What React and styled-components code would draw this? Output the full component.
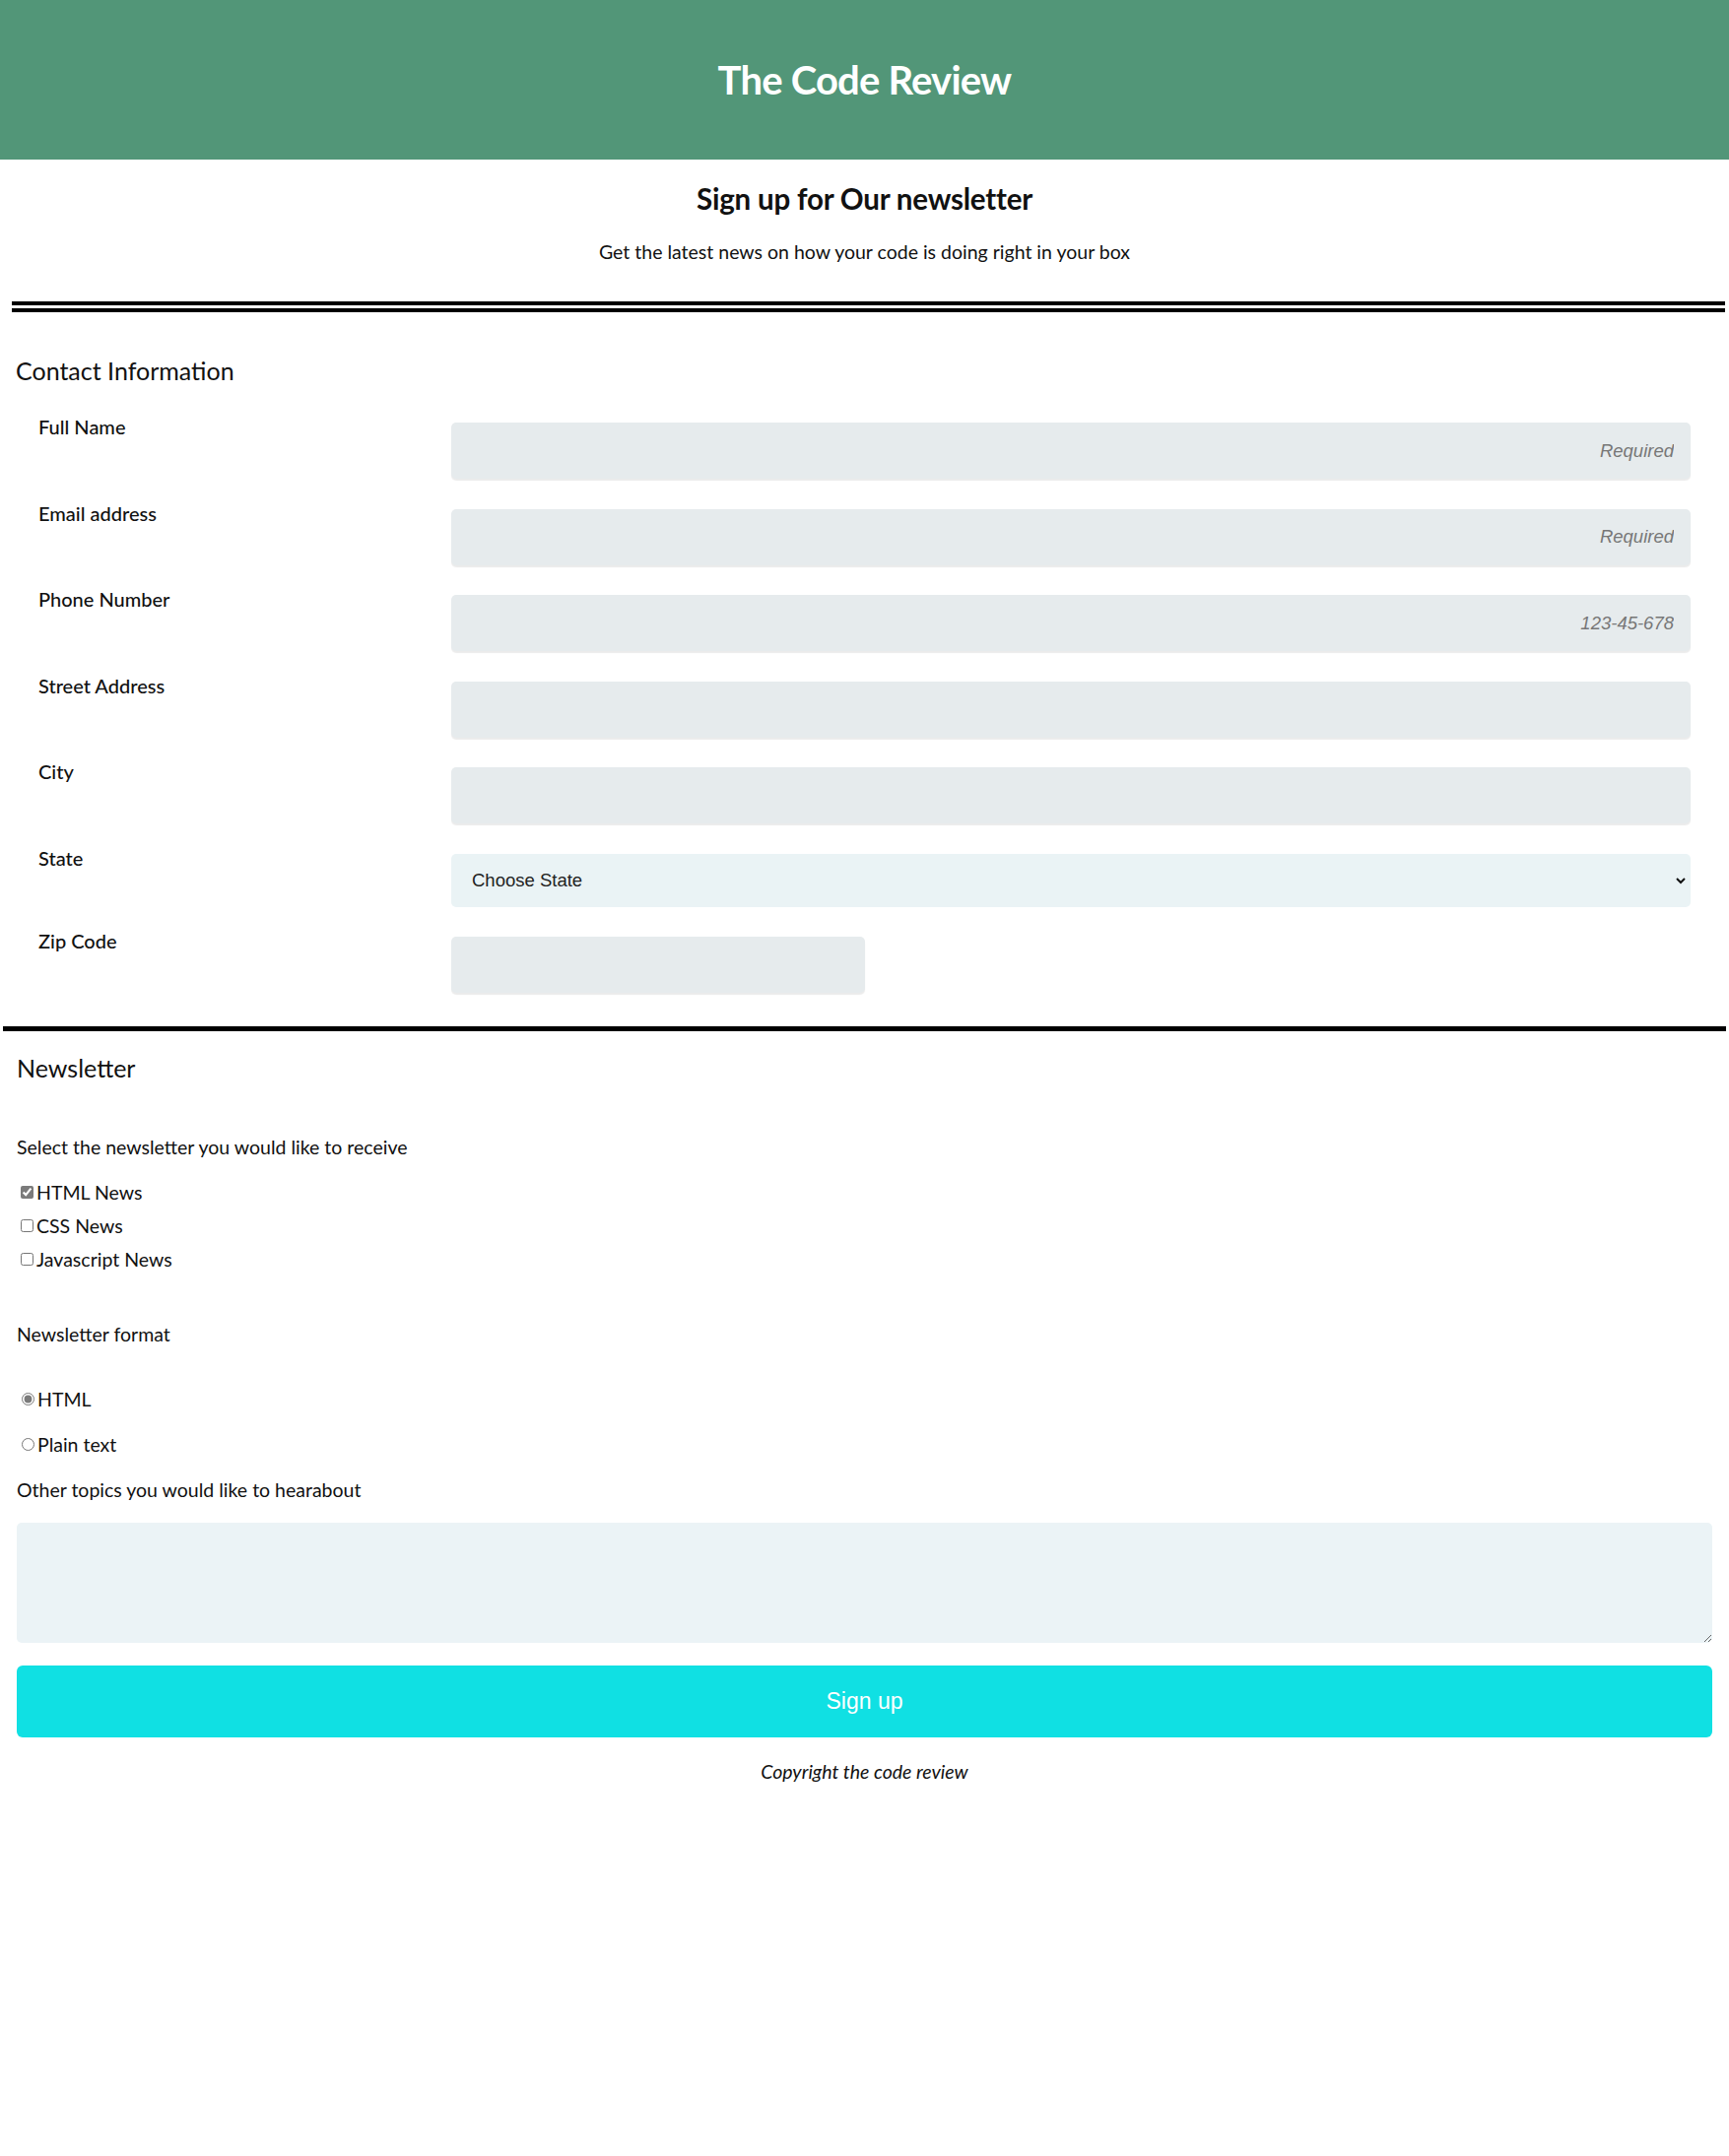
import React from 'react';
import styled, { createGlobalStyle } from 'styled-components';

const GlobalStyle = createGlobalStyle`
  html, body {
    margin: 0;
    padding: 0;
    background: #ffffff;
  }
  body {
    font-family: Lato, "Noto Sans", sans-serif;
    color: #111;
  }
  * {
    box-sizing: border-box;
  }
`;

const Page = styled.div`
  min-height: 2189px;
  padding-bottom: 40px;
`;

const Header = styled.header`
  height: 162px;
  background: #529678;
  display: flex;
  align-items: center;
  justify-content: center;
`;

const Title = styled.h1`
  margin: 0;
  color: #fff;
  font-size: 40px;
  font-weight: 700;
  letter-spacing: -0.8px;
`;

const Intro = styled.section`
  text-align: center;
  padding-top: 22px;
`;

const Heading2 = styled.h2`
  margin: 0;
  font-size: 29.5px;
  font-weight: 700;
  letter-spacing: -0.2px;
`;

const Lead = styled.p`
  margin: 25px 0 0;
  font-size: 19.5px;
`;

const DoubleRule = styled.hr`
  margin: 39px 4px 0 12px;
  border: none;
  border-top: 11px double #000;
  height: 0;
`;

const SolidRule = styled.hr`
  margin: 34px 3px 0 3px;
  border: none;
  border-top: 5px solid #000;
  height: 0;
`;

const Section = styled.section`
  padding: ${(p) => p.pad || '0 17px'};
`;

const SectionTitle = styled.h3`
  margin: 0;
  padding-top: ${(p) => p.top || '44px'};
  font-size: 25px;
  font-weight: 400;
  color: #111;
`;

const Rows = styled.div`
  display: flex;
  flex-direction: column;
  gap: 30.5px;
  margin-top: 38px;
  padding-right: 39px;
`;

const Row = styled.div`
  display: grid;
  grid-template-columns: 442px 1fr;
  align-items: start;
`;

const Label = styled.label`
  margin-top: -6px;
  padding-left: 23px;
  font-size: 20px;
  line-height: 20px;
  font-weight: 500;
  color: #111;
`;

const Input = styled.input`
  width: ${(p) => p.w || '100%'};
  height: 57px;
  border: none;
  border-radius: 5px;
  background: #e6ebed;
  box-shadow: 0 2px 1px rgba(0, 0, 0, 0.08);
  padding: 0 17px;
  text-align: right;
  font-family: "Liberation Sans", Arial, sans-serif;
  font-size: 18.5px;
  color: #333;
  outline: none;

  &::placeholder {
    color: #777;
    font-style: italic;
  }
`;

const SelectWrap = styled.div`
  position: relative;
`;

const Select = styled.select`
  width: 100%;
  height: 54px;
  border: none;
  border-radius: 5px;
  background: #eaf3f5;
  padding: 0 40px 0 21px;
  appearance: none;
  font-family: "Liberation Sans", Arial, sans-serif;
  font-size: 18.5px;
  color: #222;
  outline: none;
`;

const Chevron = styled.svg`
  position: absolute;
  right: 4px;
  top: 21px;
  pointer-events: none;
`;

const Prompt = styled.p`
  margin: ${(p) => p.m || '0'};
  font-size: 19.5px;
  color: #111;
`;

const ChoiceList = styled.div`
  display: flex;
  flex-direction: column;
  gap: ${(p) => p.gap || '11px'};
  margin-top: ${(p) => p.top || '0'};
`;

const Choice = styled.label`
  display: flex;
  align-items: center;
  font-size: 19.5px;
  line-height: 23px;
  color: #111;

  input {
    accent-color: #7b7b7b;
    margin: 0 3px 0 4px;
  }

  input[type='radio'] {
    margin: 0 3px 0 5px;
  }
`;

const TextArea = styled.textarea`
  display: block;
  width: 100%;
  height: 122px;
  margin-top: 22px;
  border: none;
  border-radius: 5px;
  background: #ebf3f6;
  outline: none;
  font-family: Lato, sans-serif;
  font-size: 18px;
`;

const SubmitButton = styled.button`
  display: block;
  width: 100%;
  height: 73px;
  margin-top: 23px;
  border: none;
  border-radius: 6px;
  background: #10e0e3;
  color: #fff;
  font-family: "Liberation Sans", Arial, sans-serif;
  font-size: 23px;
  cursor: pointer;
`;

const Footer = styled.footer`
  text-align: center;
  font-style: italic;
  font-size: 19.5px;
  margin-top: 23px;
`;

const contactFields = [
  { id: 'name', label: 'Full Name', placeholder: 'Required', type: 'text' },
  { id: 'email', label: 'Email address', placeholder: 'Required', type: 'email' },
  { id: 'phone', label: 'Phone Number', placeholder: '123-45-678', type: 'tel' },
  { id: 'street', label: 'Street Address', placeholder: '', type: 'text' },
  { id: 'city', label: 'City', placeholder: '', type: 'text' },
];

export default function App() {
  return (
    <Page>
      <GlobalStyle />
      <Header>
        <Title>The Code Review</Title>
      </Header>

      <Intro>
        <Heading2>Sign up for Our newsletter</Heading2>
        <Lead>Get the latest news on how your code is doing right in your box</Lead>
      </Intro>

      <DoubleRule />

      <Section pad="0 0 0 16px">
        <SectionTitle>Contact Information</SectionTitle>
        <Rows>
          {contactFields.map((f) => (
            <Row key={f.id}>
              <Label htmlFor={f.id}>{f.label}</Label>
              <Input id={f.id} type={f.type} placeholder={f.placeholder} />
            </Row>
          ))}
          <Row>
            <Label htmlFor="state">State</Label>
            <SelectWrap>
              <Select id="state" defaultValue="">
                <option value="">Choose State</option>
                <option value="ca">California</option>
                <option value="ny">New York</option>
                <option value="tx">Texas</option>
              </Select>
              <Chevron width="12" height="12" viewBox="0 0 12 12">
                <path d="M2 4 L6 8 L10 4" fill="none" stroke="#111" strokeWidth="2" />
              </Chevron>
            </SelectWrap>
          </Row>
          <Row>
            <Label htmlFor="zip">Zip Code</Label>
            <Input id="zip" type="text" w="420px" />
          </Row>
        </Rows>
      </Section>

      <SolidRule />

      <Section>
        <SectionTitle top="22px">Newsletter</SectionTitle>
        <Prompt m="54px 0 0">Select the newsletter you would like to receive</Prompt>
        <ChoiceList top="23px" gap="11px">
          <Choice>
            <input type="checkbox" defaultChecked />
            HTML News
          </Choice>
          <Choice>
            <input type="checkbox" />
            CSS News
          </Choice>
          <Choice>
            <input type="checkbox" />
            Javascript News
          </Choice>
        </ChoiceList>

        <Prompt m="53px 0 0">Newsletter format</Prompt>
        <ChoiceList top="43px" gap="23px">
          <Choice>
            <input type="radio" name="format" defaultChecked />
            HTML
          </Choice>
          <Choice>
            <input type="radio" name="format" />
            Plain text
          </Choice>
        </ChoiceList>

        <Prompt m="23px 0 0">Other topics you would like to hearabout</Prompt>
        <TextArea />
        <SubmitButton type="submit">Sign up</SubmitButton>
        <Footer>Copyright the code review</Footer>
      </Section>
    </Page>
  );
}
